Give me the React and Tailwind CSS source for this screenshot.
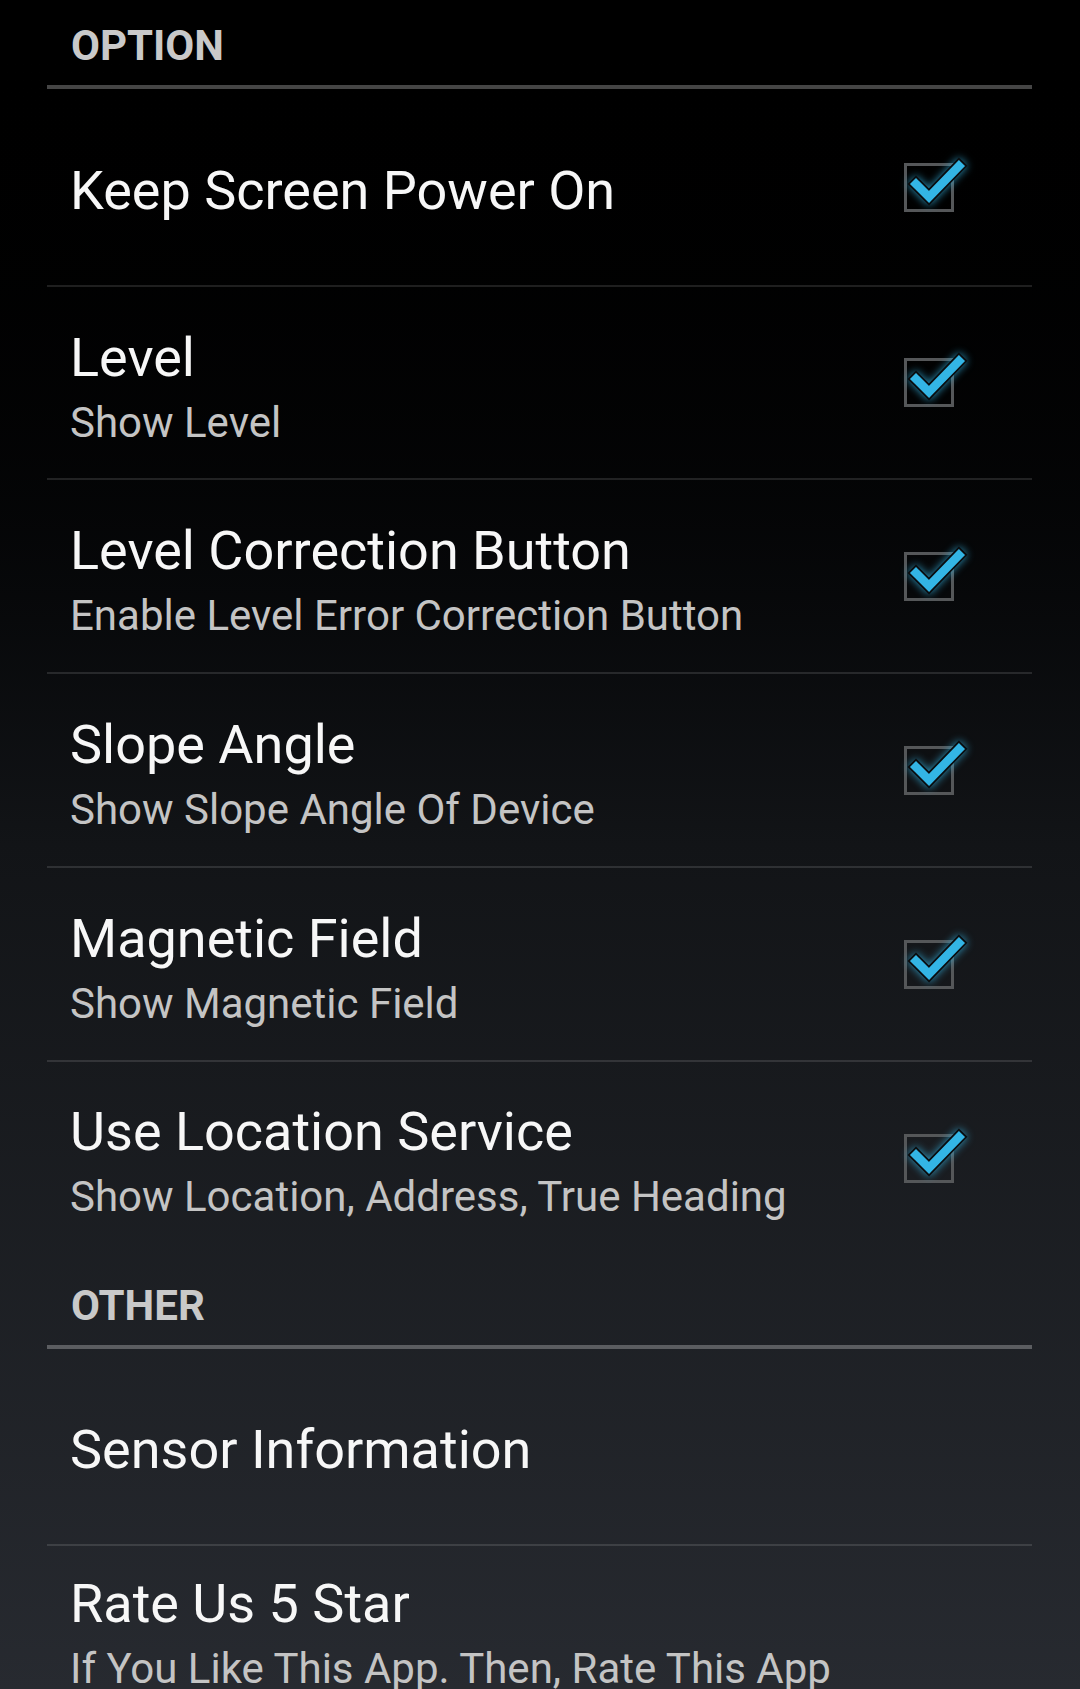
import React from "react";

function Check() {
  return (
    <div className="relative w-[50px] h-[49px] border-[3px] border-[#555759] shrink-0">
      <svg
        className="absolute left-[-3px] top-[-3px] overflow-visible"
        width="50"
        height="49"
        viewBox="0 0 50 49"
        style={{ filter: "drop-shadow(0 0 4px rgba(51,181,229,0.8))" }}
      >
        <polyline
          points="12,21 25,34 55,3"
          fill="none"
          stroke="#0a0c0e"
          strokeWidth="12"
          strokeLinejoin="miter"
          strokeLinecap="square"
        />
        <polyline
          points="12,21 25,34 55,3"
          fill="none"
          stroke="#33b5e5"
          strokeWidth="8.5"
          strokeLinejoin="miter"
          strokeLinecap="square"
        />
      </svg>
    </div>
  );
}

function Sep() {
  return <div className="h-[2px] bg-white/[0.12]" />;
}

function Header({ label, pt }) {
  return (
    <div>
      <div className={`${pt} pb-[15px] pl-[24px] text-[42px] leading-[48px] font-bold text-[#c9c9c9]`}>
        {label}
      </div>
      <div className="h-[4px] bg-white/[0.27]" />
    </div>
  );
}

function Row({ title, subtitle, h, pt, check = true }) {
  return (
    <div className={`${h} flex justify-between`}>
      <div className={`${pt} pl-[23px]`}>
        <div className="text-[54px] leading-[64px] text-[#f7f7f7]">{title}</div>
        {subtitle && (
          <div className="mt-[9px] text-[42px] leading-[48px] text-[#c4c4c4] whitespace-nowrap">
            {subtitle}
          </div>
        )}
      </div>
      {check && (
        <div className="self-center pr-[78px]">
          <Check />
        </div>
      )}
    </div>
  );
}

export default function App() {
  return (
    <div
      className="w-[1080px] h-[1689px] overflow-hidden bg-gradient-to-b from-[#000000] via-[#121417] to-[#272a30]"
      style={{ fontFamily: "Roboto, 'Noto Sans', sans-serif" }}
    >
      <div className="ml-[47px] mr-[48px]">
        <Header label="OPTION" pt="pt-[22px]" />
        <Row title="Keep Screen Power On" h="h-[196px]" pt="pt-[70px]" />
        <Sep />
        <Row title="Level" subtitle="Show Level" h="h-[191px]" pt="pt-[39px]" />
        <Sep />
        <Row
          title="Level Correction Button"
          subtitle="Enable Level Error Correction Button"
          h="h-[192px]"
          pt="pt-[39px]"
        />
        <Sep />
        <Row title="Slope Angle" subtitle="Show Slope Angle Of Device" h="h-[192px]" pt="pt-[39px]" />
        <Sep />
        <Row title="Magnetic Field" subtitle="Show Magnetic Field" h="h-[192px]" pt="pt-[39px]" />
        <Sep />
        <Row
          title="Use Location Service"
          subtitle="Show Location, Address, True Heading"
          h="h-[192px]"
          pt="pt-[38px]"
        />
        <Header label="OTHER" pt="pt-[28px]" />
        <Row title="Sensor Information" h="h-[195px]" pt="pt-[69px]" check={false} />
        <Sep />
        <Row
          title="Rate Us 5 Star"
          subtitle="If You Like This App. Then, Rate This App"
          h="h-[200px]"
          pt="pt-[26px]"
          check={false}
        />
      </div>
    </div>
  );
}
